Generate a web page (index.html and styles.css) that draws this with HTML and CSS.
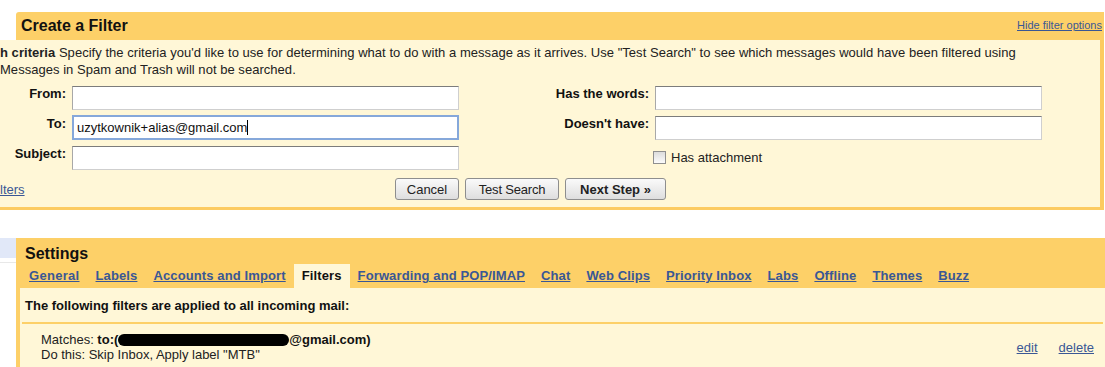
FILE: index.html
```html
<!DOCTYPE html>
<html lang="en">
<head>
    <meta charset="UTF-8">
    <title>Create a Filter</title>
    <link rel="stylesheet" href="styles.css">
</head>
<body>

<div class="filter-box">
    <div class="filter-head">
        <h2>Create a Filter</h2>
        <a href="#" class="small-link">Hide filter options</a>
    </div>
    <div class="filter-body">
        <p class="intro"><b>h criteria</b> Specify the criteria you'd like to use for determining what to do with a message as it arrives. Use "Test Search" to see which messages would have been filtered using<br>Messages in Spam and Trash will not be searched.</p>

        <div class="criteria">
            <label>From:</label>
            <input type="text" class="field">
            <label>Has the words:</label>
            <input type="text" class="field">

            <label>To:</label>
            <div class="field focused">uzytkownik+alias@gmail.com<span class="caret"></span></div>
            <label>Doesn't have:</label>
            <input type="text" class="field">

            <label>Subject:</label>
            <input type="text" class="field">
            <span></span>
            <div class="attach"><input type="checkbox" class="check"> Has attachment</div>
        </div>

        <div class="actions">
            <a href="#" class="link">lters</a>
            <div class="buttons">
                <button class="btn btn-cancel">Cancel</button>
                <button class="btn btn-test">Test Search</button>
                <button class="btn btn-next">Next Step &raquo;</button>
            </div>
        </div>
    </div>
</div>

<div class="settings-row">
    <div class="side-nav">
        <div class="side-item"></div>
        <div class="side-rule"></div>
    </div>
    <div class="settings">
        <div class="settings-head">
            <h2>Settings</h2>
            <div class="tabs">
                <a href="#" class="tab tab-first">General</a>
                <a href="#" class="tab">Labels</a>
                <a href="#" class="tab">Accounts and Import</a>
                <span class="tab active">Filters</span>
                <a href="#" class="tab">Forwarding and POP/IMAP</a>
                <a href="#" class="tab">Chat</a>
                <a href="#" class="tab">Web Clips</a>
                <a href="#" class="tab">Priority Inbox</a>
                <a href="#" class="tab">Labs</a>
                <a href="#" class="tab">Offline</a>
                <a href="#" class="tab">Themes</a>
                <a href="#" class="tab">Buzz</a>
            </div>
        </div>
        <div class="settings-body">
            <p class="applied">The following filters are applied to all incoming mail:</p>
            <div class="filter-row">
                <div class="rule">
                    <div>Matches: <b>to:(<span class="redacted"></span>@gmail.com)</b></div>
                    <div>Do this: Skip Inbox, Apply label "MTB"</div>
                </div>
                <div class="row-links">
                    <a href="#" class="link">edit</a>
                    <a href="#" class="link">delete</a>
                </div>
            </div>
        </div>
    </div>
</div>

</body>
</html>
```

FILE: styles.css
```css
body {
    margin: 0;
    padding: 0;
    font-family: 'Liberation Sans', Arial, sans-serif;
    font-size: 13px;
    color: #222;
    background-color: #fff;
    overflow: hidden;
}
a {
    color: #3a5795;
}

/* Create a Filter box */
.filter-box {
    margin-top: 12px;
    width: 1104px;
}
.filter-head {
    margin-left: 16px;
    height: 28px;
    background-color: #fdd068; /* orange */
    border-radius: 3px 0 0 0;
    display: flex;
    align-items: center;
    justify-content: space-between;
    padding: 0 2px 0 5px;
}
.filter-head h2 {
    margin: 0;
    font-size: 16px;
    color: #111;
}
.small-link {
    font-size: 11px;
    margin-top: -3px;
}
.filter-body {
    background-color: #fff7d7; /* light yellow */
    border-right: 4px solid #fccb61;
    border-bottom: 3px solid #fccb61;
    padding: 4px 0 7px 0;
}
.intro {
    margin: 0;
    line-height: 17px;
    letter-spacing: 0.035px;
}
.criteria {
    display: grid;
    grid-template-columns: 66px 387px 184px 387px;
    grid-auto-rows: 24px;
    column-gap: 6px;
    row-gap: 6px;
    margin-top: 8px;
}
.criteria label {
    font-weight: bold;
    text-align: right;
    line-height: 15px;
    color: #111;
}
.field {
    box-sizing: border-box;
    height: 24px;
    margin: 0;
    background-color: #fff;
    border: 1px solid #cfcfcf;
    border-top-color: #7c7c7c;
    border-left-color: #a8a8a8;
    font-family: inherit;
    font-size: 13px;
}
.field.focused {
    height: 25px;
    margin-top: -1px;
    border: 2px solid #86a8da;
    padding: 0 0 0 3px;
    line-height: 21px;
    color: #111;
}
.caret {
    display: inline-block;
    width: 1px;
    height: 15px;
    background-color: #000;
    vertical-align: -3px;
}
.attach {
    display: flex;
    align-items: center;
    gap: 5px;
    padding-top: 4px;
    align-self: start;
}
.check {
    appearance: none;
    -webkit-appearance: none;
    margin: 0 0 0 -2px;
    width: 13px;
    height: 13px;
    border: 1px solid #8f8f8f;
    background: linear-gradient(#dcdcdc, #fbfbfb);
    box-sizing: border-box;
}

.actions {
    display: grid;
    grid-template-columns: 395px auto;
    align-items: center;
    margin-top: 8px;
}
.buttons {
    display: flex;
    gap: 6px;
}
.btn {
    height: 22px;
    padding: 0 10px;
    font-family: inherit;
    font-size: 13px;
    color: #222;
    background: linear-gradient(#fafafa, #dedede);
    border: 1px solid #8e8e8e;
    border-radius: 3px;
}
.btn-cancel {
    width: 64px;
}
.btn-test {
    width: 94px;
    letter-spacing: -0.2px;
}
.btn-next {
    width: 101px;
    font-weight: bold;
}

/* Settings */
.settings-row {
    display: flex;
    margin-top: 28px;
}
.side-nav {
    width: 16px;
    flex-shrink: 0;
}
.side-item {
    height: 20px;
    background-color: #e1e8f8;
}
.side-rule {
    margin-top: 4px;
    height: 1px;
    background-color: #e8e8e8;
}
.settings {
    flex: 1;
}
.settings-head {
    background-color: #fdd068;
    padding-top: 6px;
}
.settings-head h2 {
    margin: 0 0 0 9px;
    font-size: 16px;
    line-height: 20px;
    color: #111;
}
.tabs {
    display: flex;
    padding-left: 5px;
}
.tab {
    padding: 0 8px;
    font-weight: bold;
    line-height: 24px;
    letter-spacing: 0.12px;
}
.tab-first {
    letter-spacing: 0.3px;
}
.tab.active {
    background-color: #fff7d7;
    color: #111;
}
.settings-body {
    background-color: #fff7d7;
    border-left: 4px solid #fdd068;
    height: 90px;
}
.applied {
    margin: 0;
    padding: 9px 5px 0;
    line-height: 17px;
    font-weight: bold;
    color: #111;
}
.filter-row {
    margin: 8px 2px 0;
    border-top: 2px solid #fdd068;
    padding: 8px 9px 0 19px;
    display: flex;
    justify-content: space-between;
    align-items: center;
    line-height: 15px;
}
.rule b {
    color: #111;
}
.redacted {
    display: inline-block;
    width: 171px;
    height: 12px;
    margin-left: 0;
    background-color: #000;
    border-radius: 6px;
    vertical-align: -2px;
}
.row-links {
    display: flex;
    gap: 21px;
}
```
